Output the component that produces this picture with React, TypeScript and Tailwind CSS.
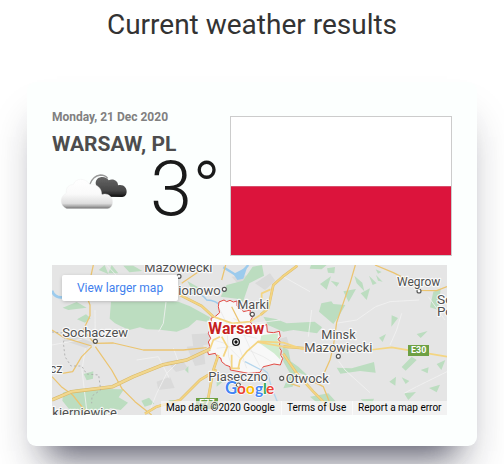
import React from 'react';

const halo = { paintOrder: 'stroke' as const };

function Clouds() {
  return (
    <svg className="h-[50px] w-[90px]" viewBox="0 0 270 150">
      <defs>
        <linearGradient id="dark" x1="0" y1="0" x2="0" y2="1">
          <stop offset="0" stopColor="#666" />
          <stop offset="0.7" stopColor="#464646" />
          <stop offset="1" stopColor="#111" />
        </linearGradient>
        <linearGradient id="light" x1="0" y1="0" x2="0" y2="1">
          <stop offset="0" stopColor="#fff" />
          <stop offset="0.5" stopColor="#fafafa" />
          <stop offset="0.82" stopColor="#dedede" />
          <stop offset="0.92" stopColor="#a8a8a8" />
          <stop offset="1" stopColor="#6f6f6f" />
        </linearGradient>
        <filter id="soft" x="-10%" y="-10%" width="120%" height="120%">
          <feGaussianBlur stdDeviation="1.8" />
        </filter>
      </defs>
      <g filter="url(#soft)">
        <path d="M119 56 Q128 30 151 27 Q166 27 173 37" fill="none" stroke="#999" strokeWidth="4" />
        <path d="M137 52 C137 28 169 28 176 43 C190 36 205 46 204 58 C221 54 231 66 230 78 C229 90 222 93 214 93 L160 92 C148 74 139 70 137 52Z" fill="url(#dark)" />
        <path d="M50 128 C28 120 28 91 49 82 C46 62 60 55 70 56 C75 36 107 34 119 55 C139 52 156 66 155 86 C170 79 188 90 188 108 C188 119 181 128 172 128Z" fill="url(#light)" stroke="#eee" strokeWidth="1.2" />
      </g>
    </svg>
  );
}

function Label({ x, y, w, size = 41, children }: { x: number; y: number; w: number; size?: number; children: string }) {
  return (
    <text x={x} y={y} textLength={w} lengthAdjust="spacingAndGlyphs" fontSize={size} fill="#505050" stroke="#fff" strokeOpacity="0.85" strokeWidth="7" strokeLinejoin="round" style={halo}>
      {children}
    </text>
  );
}

const towns = [[537, 829], [673, 868], [757, 943], [1257, 873], [286, 1024], [1015, 1069], [845, 1135], [715, 1155]];

function MapArt() {
  return (
    <svg className="block h-full w-full" viewBox="156 795 1185 450" fontFamily="Roboto, sans-serif">
      <rect x="156" y="795" width="1185" height="450" fill="#e5e5e5" />
      <g fill="#dadada">
        <path d="M186 1020 L235 1010 L282 1030 L258 1044Z M470 1145 L510 1130 L524 1164 L475 1170Z M500 1084 L546 1078 L565 1106 L528 1116Z M575 1003 L630 1000 L626 1033 L580 1040Z M765 850 L810 820 L826 842 L795 870Z M560 1040 L610 1035 L616 1092 L585 1098Z M695 830 L745 826 L730 870Z M835 1018 L860 1010 L870 1044 L840 1060Z" />
      </g>
      <g fill="#bcddc0">
        <path d="M333 905 L535 905 L570 919 L630 952 L625 966 L590 960 L565 982 L530 995 L480 989 L440 988 L420 982 L388 990 L363 979 L345 970 L329 956Z" />
        <path d="M190 1177 L240 1166 L372 1168 L356 1192 L384 1208 L362 1230 L330 1224 L318 1245 L230 1245 L205 1225 L187 1202Z" />
        <path d="M790 950 L828 957 L860 970 L944 965 L966 982 L951 1000 L880 990 L850 995 L805 976Z" />
        <path d="M785 1007 L835 1004 L845 1052 L840 1090 L790 1045Z M848 1042 L865 1050 L872 1084 L895 1100 L927 1130 L890 1115 L878 1160 L850 1165 L870 1120 L850 1085Z" />
        <path d="M680 855 L729 842 L758 800 L786 795 L792 827 L748 850 L729 905 L710 896 L662 890Z" />
        <path d="M964 910 L994 904 L1000 912 L1036 915 L1017 948 L1000 972 L957 935Z" />
        <path d="M1030 874 L1068 867 L1046 906Z M1082 880 L1110 865 L1100 900Z M1063 827 L1087 848 L1093 874 L1070 850Z M1107 827 L1130 850 L1118 855Z M1128 825 L1148 845 L1134 842Z M981 805 L1005 801 L1003 820 L984 818Z M960 852 L993 829 L980 869Z M933 795 L980 795 L965 808 L929 806Z M992 842 L1018 848 L1010 860Z" />
        <path d="M1175 946 L1194 954 L1174 980Z M1137 1013 L1158 1002 L1148 1026Z M1300 875 L1322 866 L1315 930 L1290 922Z M1250 1002 L1283 993 L1262 1014Z" />
        <path d="M1010 1103 L1055 1105 L1122 1086 L1127 1118 L1080 1113 L1021 1121Z M1168 1145 L1188 1130 L1186 1157Z M1205 1101 L1235 1070 L1250 1080 L1217 1112Z M1262 1110 L1286 1102 L1283 1120Z M1212 1180 L1248 1176 L1225 1200Z M1082 1198 L1122 1196 L1113 1222Z M930 1190 L985 1180 L1008 1205 L955 1211Z M1287 1164 L1320 1154 L1310 1177Z M1310 1092 L1336 1080 L1324 1110Z M1205 1132 L1228 1143 L1217 1152Z" />
        <path d="M335 795 L355 820 L325 820Z M296 810 L314 795 L325 822Z M370 797 L400 797 L427 813 L388 817Z M188 923 L230 906 L260 923 L205 930Z M231 958 L258 943 L272 955 L255 968Z M251 1122 L280 1114 L279 1136 L260 1141Z M424 1202 L447 1193 L463 1211 L434 1220Z M505 1200 L540 1200 L524 1218Z M555 1110 L565 1098 L565 1120Z M600 1200 L622 1190 L612 1214Z M650 1134 L672 1142 L650 1160Z M1127 808 L1145 816 L1134 821Z M965 1010 L991 1008 L980 1020Z M562 843 L600 865 L580 878Z" />
      </g>
      <g fill="none" stroke="#f2f2f2" strokeWidth="2.5">
        <path d="M476 995 L490 970 L498 906 M156 1035 L245 1018 M256 1045 L246 1110 L260 1230 M286 1045 L285 930 M520 1044 L535 1085 L500 1120 L470 1180 L450 1230 M508 1135 L475 1070 L410 1080 M1007 970 L1070 960 L1127 920 L1170 905 L1257 900 M1285 890 L1310 925 L1335 960 M1205 940 L1190 990 L1170 1035 M935 930 L925 1010 M1015 1082 L1035 1110 L1110 1178 M1212 1180 L1250 1160 L1341 1115 M760 970 L840 960 M710 1138 L726 1185 M850 830 L930 875 M320 795 L360 838" />
      </g>
      <path d="M156 872 Q163 893 186 892" fill="none" stroke="#9ccbed" strokeWidth="8" />
      <path d="M574 880 Q603 875 620 900 Q650 900 666 923 L677 955 L700 972" fill="none" stroke="#9ccbed" strokeWidth="4" />
      <path d="M670 802 L714 829 L745 795" fill="none" stroke="#9ccbed" strokeWidth="7" />
      <path d="M700 822 L742 800 L730 836 L712 840Z" fill="#9ccbed" />
      <path d="M657 906 L672 900 L680 905 L690 901 L700 906 L711 903 L711 917 L718 926 L726 927 L730 935 L751 930 L750 945 L757 952 L750 965 L758 975 L766 973 L780 983 L800 973 L802 996 L820 998 L838 994 L841 1010 L834 1018 L841 1026 L835 1040 L844 1052 L842 1066 L848 1075 L841 1095 L822 1092 L804 1097 L790 1100 L780 1117 L745 1120 L691 1110 L690 1100 L677 1095 L665 1085 L662 1074 L651 1070 L646 1060 L626 1064 L621 1050 L630 1040 L625 1026 L632 1015 L625 1000 L636 975 L633 955 L645 950 L659 938 L655 920Z" fill="#f8f8f8" stroke="#e34a43" strokeWidth="3" strokeLinejoin="round" />
      <path d="M784 1006 L835 1000 L832 1018 L838 1040 L842 1080 L822 1060 L779 1030Z" fill="#d0eccf" />
      <g fill="none" stroke="#e6e6e6" strokeWidth="2">
        <path d="M650 1000 L710 1000 L770 1015 M650 1045 L716 1037 L740 1105 M660 930 L680 970 L686 1070 L700 1110 M730 1000 L748 1040 L780 1100 M700 955 L745 976 M640 1020 L675 1030 L730 1085 M745 1050 L790 1070 L815 1085" />
      </g>
      <g fill="none" stroke="#ebc470" strokeWidth="3.8" strokeLinejoin="round">
        <path d="M280 795 L270 840 L258 884 L270 915 L270 947 L250 990 L283 1030 L340 1029 L430 1050 L550 1050 L620 1043 M156 990 L190 1012 L275 1038 M275 1040 L245 1070 L218 1115 L187 1120 M286 1040 L335 1110 L366 1166 L405 1205 L455 1245 M156 1130 L184 1160 L218 1185 L265 1245 M1066 795 L1050 850 L1010 967 L1000 1040 L990 1080 L970 1125 M1125 795 L1180 818 L1220 838 L1257 871 L1310 872 L1341 860 M695 920 L720 970 M677 795 L665 840 M545 850 L600 812 M870 1150 L900 1160 M920 1135 L970 1160 L990 1210" />
      </g>
      <g fill="none" strokeLinejoin="round">
        <g stroke="#d9b868" strokeWidth="10.5">
          <path d="M156 1200 L215 1175 L338 1160 L400 1130 L490 1094 L560 1080 L630 1047" />
        </g>
        <g stroke="#dfbf70" strokeWidth="8">
          <path d="M782 944 L805 925 L820 855 L848 830 L892 797 M530 880 L605 918 L640 950 M435 1241 L470 1220 L540 1200 L600 1140 L650 1110 M655 1065 L640 1110 L620 1220 M850 1040 L930 1046 M850 1061 L890 1120 L940 1175 L985 1220" />
        </g>
        <g stroke="#f1d78f" strokeWidth="7">
          <path d="M156 1200 L215 1175 L338 1160 L400 1130 L490 1094 L560 1080 L630 1047" />
        </g>
        <g stroke="#f4d582" strokeWidth="5.2">
          <path d="M630 1047 L640 1020 L660 1010 M640 950 L697 970 L750 965 L782 944 L805 925 L820 855 L848 830 L892 797 M530 880 L605 918 L640 950 M435 1241 L470 1220 L540 1200 L600 1140 L650 1110 M655 1065 L640 1110 L620 1220 M770 1026 L850 1040 L930 1046 L1110 1050 L1175 1042 L1341 1070 M850 1061 L890 1120 L940 1175 L985 1220 M695 1064 L695 1105 M714 1108 L720 1080 L740 1055 L775 1024 L850 1028 L910 1048 M665 1010 L682 1040 L670 1070 M785 900 L785 880 L812 868 M692 1105 L720 1105" />
        </g>
      </g>
      <path d="M156 996 L198 1000 L190 1028 L195 1070 L213 1098 L245 1098 L260 1122 L296 1125 L302 1170 L276 1188 L275 1210" fill="none" stroke="#aaa" strokeWidth="2.5" strokeDasharray="6 7" />
      <path d="M785 1105 L802 1118 L814 1160 L832 1205 M735 1085 L784 1110" fill="none" stroke="#b4d6ed" strokeWidth="4" />
      <g fill="#fff" stroke="#555" strokeWidth="3.5">
        {towns.map(([x, y]) => <circle key={x} cx={x} cy={y} r="6" />)}
      </g>
      <Label x={433} y={815} w={204}>Mazowiecki</Label>
      <Label x={535} y={884} w={127}>ionowo</Label>
      <Label x={712} y={926} w={95}>Marki</Label>
      <Label x={1191} y={859} w={130} size={38}>Wegrow</Label>
      <Label x={1311} y={911} w={48}>So</Label>
      <Label x={1311} y={949} w={48}>Po</Label>
      <Label x={187} y={1010} w={197}>Sochaczew</Label>
      <Label x={964} y={1016} w={103}>Minsk</Label>
      <Label x={913} y={1055} w={204}>Mazowiecki</Label>
      <Label x={149} y={1118} w={38}>cz</Label>
      <Label x={625} y={1142} w={179}>Piaseczno</Label>
      <Label x={857} y={1148} w={129}>Otwock</Label>
      <Label x={157} y={1252} w={194}>kierniewice</Label>
      <text x="625" y="1003" textLength="168" lengthAdjust="spacingAndGlyphs" fontSize="48" fontWeight="700" fill="#c5221f" stroke="#fff" strokeWidth="7" style={halo}>Warsaw</text>
      <circle cx="708" cy="1026" r="10" fill="#fff" stroke="#111" strokeWidth="4" />
      <circle cx="708" cy="1026" r="5" fill="#111" />
      <rect x="1224" y="1035" width="63" height="33" fill="#6da044" />
      <text x="1233" y="1060" textLength="46" lengthAdjust="spacingAndGlyphs" fontSize="27" fontWeight="700" fill="#fff">E30</text>
      <rect x="588" y="1194" width="66" height="33" fill="#6da044" />
      <text x="598" y="1219" textLength="46" lengthAdjust="spacingAndGlyphs" fontSize="27" fontWeight="700" fill="#fff">E77</text>
      <text y="1182" fontSize="46" fontWeight="700" fontFamily="Lato, sans-serif" stroke="#fff" strokeWidth="4" style={halo}>
        <tspan x="675" fontSize="50" fill="#4285f4">G</tspan>
        <tspan x="711" fill="#ea4335">o</tspan>
        <tspan x="738" fill="#fbbc05">o</tspan>
        <tspan x="765" fill="#4285f4">g</tspan>
        <tspan x="789" fill="#34a853">l</tspan>
        <tspan x="798" fill="#ea4335">e</tspan>
      </text>
    </svg>
  );
}

export default function App() {
  return (
    <main className="flex h-[464px] w-[504px] flex-col items-center overflow-hidden bg-white font-[Roboto,sans-serif]">
      <h1 className="flex h-[82px] shrink-0 items-start pt-[4px] text-[28px] leading-[42px] text-[#333]">Current weather results</h1>
      <section className="h-[364px] w-[450px] shrink-0 rounded-[9px] bg-[#fcfffe] px-[25px] pt-[25px] shadow-[0_30px_30px_-25px_rgba(26,26,52,0.62),0_30px_40px_-10px_rgba(20,20,40,0.28)]">
        <div className="flex h-[158px] justify-between">
          <div className="w-[170px]">
            <p className="pt-px text-[12px] leading-[18px] font-bold text-[#808080]">Monday, 21 Dec 2020</p>
            <h2 className="mt-[3px] text-[21px] leading-[30px] font-bold whitespace-nowrap text-[#4d4d4d]">WARSAW, PL</h2>
            <div className="flex h-[70px] items-start">
              <div className="mt-[7px] -ml-[2px] w-[100px]"><Clouds /></div>
              <span className="-mt-[10px] text-[76px] leading-[80px] font-light whitespace-nowrap text-[#1a1a1a]">3°</span>
            </div>
          </div>
          <div className="mt-[9px] flex h-[140px] w-[222px] flex-col border border-[#ccc]">
            <div className="h-[69px] bg-white" />
            <div className="flex-1 border-t border-[#d64f6c] bg-[#dc143c]" />
          </div>
        </div>
        <div className="relative h-[150px] w-[395px] overflow-hidden">
          <MapArt />
          <a className="absolute top-[10px] left-[10px] flex h-[26px] w-[116px] items-center justify-center rounded-[2px] bg-white text-[12px] text-[#427fed] shadow-[0_1px_4px_-1px_rgba(0,0,0,0.3)]">View larger map</a>
          <div className="absolute right-0 bottom-0 flex h-[14px] bg-[#f5f5f5]/75 text-[10px] leading-[14px] whitespace-nowrap text-black">
            <span className="w-[120px] pl-[5px]">Map data ©2020 Google</span>
            <span className="w-[71px] border-l border-white/60 pl-[5px]">Terms of Use</span>
            <span className="w-[95px] border-l border-white/60 pl-[5px]">Report a map error</span>
          </div>
        </div>
      </section>
    </main>
  );
}
